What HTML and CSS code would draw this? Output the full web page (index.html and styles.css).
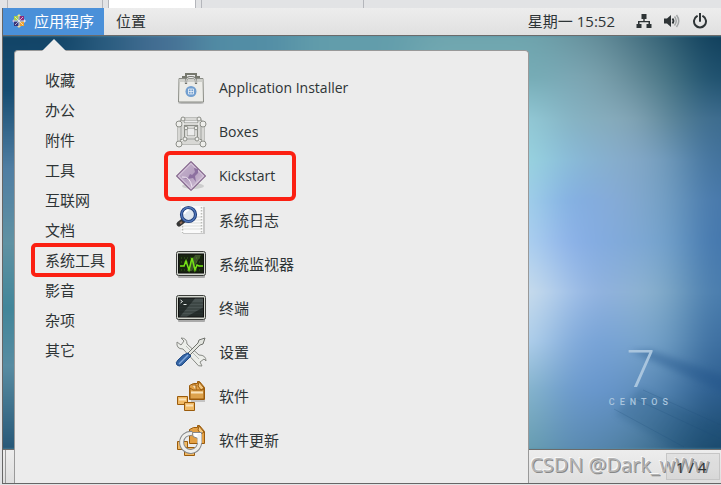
FILE: index.html
```html
<!DOCTYPE html>
<html lang="zh-CN">
<head>
<meta charset="utf-8">
<meta name="viewport" content="width=device-width, initial-scale=1">
<title>应用程序</title>
<link rel="stylesheet" href="styles.css">
</head>
<body>
<div class="host-tabs"><span class="host-tab"></span><span class="host-tab host-tab-active"></span><span class="host-tab"></span></div>
<div class="screen">
  <header class="topbar">
    <button class="top-item top-item-active" type="button">
      <svg class="distro" viewBox="0 0 14 14" aria-hidden="true">
        <path d="M7 0l2.500 2.500H4.500z" fill="#e8e36a"/><path d="M14 7l-2.500 2.500v-5z" fill="#d9dcf0"/><path d="M7 14l-2.500-2.500h5z" fill="#f3d28a"/><path d="M0 7l2.500-2.500v5z" fill="#b9a6d8"/>
        <path d="M2 2h4.500v4.500H2z" fill="#a9cf4c"/><path d="M7.500 2H12v4.500H7.500z" fill="#8c2c7c"/><path d="M7.500 7.500H12V12H7.500z" fill="#f0a532"/><path d="M2 7.500h4.500V12H2z" fill="#3b3478"/>
        <path d="M7 1v12M1 7h12M3 3l8 8M11 3l-8 8" stroke="#f1eef0" stroke-width=".7"/>
      </svg>
      应用程序
    </button>
    <button class="top-item" type="button">位置</button>
    <time class="clock">星期一 15:52</time>
    <div class="status">
      <svg viewBox="0 0 16 16" aria-hidden="true"><path d="M5.500 1h5v5H8.700v2H14v3h1.500v4h-5v-4h2V9.300h-9V11h2v4h-5v-4H2V8h5.300V6H5.500z" fill="#2e3436"/></svg>
      <svg viewBox="0 0 16 16" aria-hidden="true"><path d="M0 5.500h3L7 2v12l-4-3.500H0z" fill="#2e3436"/><path d="M8.500 5.500q2 2.500 0 5" stroke="#2e3436" stroke-width="1.800" fill="none"/><path d="M10.500 3.500q3.500 4.500 0 9M12.500 2q4.500 6 0 12" stroke="#a3a6a7" stroke-width="1.500" fill="none"/></svg>
      <svg viewBox="0 0 16 16" aria-hidden="true"><path d="M5 3.200a6 6 0 1 0 6 0M8 .5V8" stroke="#2e3436" stroke-width="2" fill="none" stroke-linecap="round"/></svg>
    </div>
  </header>
  <main class="desktop">
    <svg class="wallpaper" viewBox="0 0 718 413" preserveAspectRatio="none" aria-hidden="true">
      <defs>
        <filter id="soft" x="-10%" y="0" width="120%" height="100%" color-interpolation-filters="sRGB"><feGaussianBlur stdDeviation="20 1"/></filter>
        <filter id="haze" color-interpolation-filters="sRGB"><feGaussianBlur stdDeviation="3"/></filter>
        <linearGradient id="c0" x2="0" y2="1"><stop stop-color="#124467"/><stop offset=".13" stop-color="#164d72"/><stop offset=".32" stop-color="#507ea3"/><stop offset=".5" stop-color="#6092a3"/><stop offset=".66" stop-color="#42869a"/><stop offset=".8" stop-color="#588ca2"/><stop offset="1" stop-color="#275878"/></linearGradient>
        <linearGradient id="c1" x2="0" y2="1"><stop stop-color="#6fa5ae"/><stop offset=".1" stop-color="#75adb6"/><stop offset=".2" stop-color="#93cad6"/><stop offset=".3" stop-color="#9ad5df"/><stop offset=".4" stop-color="#a4d2ea"/><stop offset=".5" stop-color="#b0d3f0"/><stop offset=".62" stop-color="#cbdeec"/><stop offset=".74" stop-color="#b4d3ec"/><stop offset=".86" stop-color="#88b7cc"/><stop offset="1" stop-color="#69a0b0"/></linearGradient>
        <linearGradient id="c2" x2="0" y2="1"><stop stop-color="#6b99a4"/><stop offset=".1" stop-color="#7ba8b6"/><stop offset=".2" stop-color="#84b3c4"/><stop offset=".3" stop-color="#88bbda"/><stop offset=".4" stop-color="#80aee3"/><stop offset=".5" stop-color="#8cb1e9"/><stop offset=".62" stop-color="#a4c4ea"/><stop offset=".74" stop-color="#86aedb"/><stop offset=".86" stop-color="#6c9acb"/><stop offset="1" stop-color="#5c8cb4"/></linearGradient>
        <linearGradient id="c3" x2="0" y2="1"><stop stop-color="#648d99"/><stop offset=".1" stop-color="#7ba1ad"/><stop offset=".2" stop-color="#86adbd"/><stop offset=".3" stop-color="#86b0cf"/><stop offset=".4" stop-color="#86acdd"/><stop offset=".5" stop-color="#82abe0"/><stop offset=".62" stop-color="#8badde"/><stop offset=".74" stop-color="#74a0d7"/><stop offset=".86" stop-color="#6796ce"/><stop offset="1" stop-color="#5686ae"/></linearGradient>
        <linearGradient id="c4" x2="0" y2="1"><stop stop-color="#4b7585"/><stop offset=".1" stop-color="#648a98"/><stop offset=".2" stop-color="#84a5b6"/><stop offset=".3" stop-color="#86a9c8"/><stop offset=".5" stop-color="#80a9d5"/><stop offset=".62" stop-color="#92b6d4"/><stop offset=".74" stop-color="#7ca7cf"/><stop offset=".86" stop-color="#6290bd"/><stop offset="1" stop-color="#4d7d9e"/></linearGradient>
        <linearGradient id="c5" x2="0" y2="1"><stop stop-color="#315f73"/><stop offset=".1" stop-color="#467483"/><stop offset=".2" stop-color="#5b8597"/><stop offset=".3" stop-color="#6f9aba"/><stop offset=".5" stop-color="#73a2ca"/><stop offset=".62" stop-color="#7ca7c6"/><stop offset=".74" stop-color="#6c9bc1"/><stop offset=".86" stop-color="#4f80ad"/><stop offset="1" stop-color="#346488"/></linearGradient>
        <linearGradient id="c6" x2="0" y2="1"><stop stop-color="#103f5c"/><stop offset=".1" stop-color="#1e506e"/><stop offset=".2" stop-color="#3c6b8e"/><stop offset=".4" stop-color="#4778ab"/><stop offset=".5" stop-color="#4477ad"/><stop offset=".62" stop-color="#497cad"/><stop offset=".74" stop-color="#3c6ea0"/><stop offset=".86" stop-color="#2c5d8e"/><stop offset="1" stop-color="#1a496b"/></linearGradient>
      </defs>
      <rect width="718" height="413" fill="#5590a5"/>
      <g filter="url(#soft)">
        <path d="M-120 0H80v413h-200z" fill="url(#c0)"/>
        <path d="M80 0h50v413H80z" fill="#2b5d80"/>
        <path d="M130 0h60v413h-60z" fill="#456f94"/>
        <path d="M190 0h100v413H190z" fill="#528da5"/>
        <path d="M290 0h120v413H290z" fill="#629dab"/>
        <path d="M410 0h135v413H410z" fill="url(#c1)"/>
        <path d="M545 0h35v413h-35z" fill="url(#c2)"/>
        <path d="M580 0h35v413h-35z" fill="url(#c3)"/>
        <path d="M615 0h35v413h-35z" fill="url(#c4)"/>
        <path d="M650 0h36v413h-36z" fill="url(#c5)"/>
        <path d="M686 0h170v413H686z" fill="url(#c6)"/>
      </g>
      <path d="M627 315l20-1 78 27v17z" fill="#1f5188" opacity=".38" filter="url(#haze)"/>
      <path d="M637 352l85 41v20h-50l-60-35z" fill="#1c5078" opacity=".22" filter="url(#haze)"/>
      <path d="M640 354l80 36M630 362l88 41M611 373l70 38" stroke="#1c4b78" opacity=".2"/>
    </svg>
    <div class="brand"><span class="brand-number">7</span><span class="brand-name">CENTOS</span></div>
  </main>
  <footer class="taskbar"><span class="taskbar-edge"></span><button class="pager" type="button">1 / 4</button></footer>
  <p class="watermark">CSDN @Dark_wWw</p>

  <nav class="menu" aria-label="应用程序">
    <ul class="categories">
      <li><button type="button">收藏</button></li>
      <li><button type="button">办公</button></li>
      <li><button type="button">附件</button></li>
      <li><button type="button">工具</button></li>
      <li><button type="button">互联网</button></li>
      <li><button type="button">文档</button></li>
      <li><button class="marked" type="button">系统工具</button></li>
      <li><button type="button">影音</button></li>
      <li><button type="button">杂项</button></li>
      <li><button type="button">其它</button></li>
    </ul>
    <ul class="apps">
      <li><button class="latin" type="button">
        <svg viewBox="0 0 32 32" aria-hidden="true"><ellipse cx="16" cy="31" rx="13" ry="1.500" fill="#bbb"/><path d="M8 7V5h3V2h10v3h3v2" fill="none" stroke="#77796f" stroke-width="2"/><path d="M4 6.500h24l.5 23.500h-25z" fill="#ecece8" stroke="#8b8d86"/><path d="M4.500 7h23v3h-23z" fill="#cfd0cb"/><path d="M11 12V9q0-4 5-4t5 4v3" fill="none" stroke="#74766e" stroke-width="2.200"/><path d="M11 11V9q0-3.500 5-3.500T21 9v2" fill="none" stroke="#eee"/><circle cx="16" cy="19.500" r="5.500" fill="#729fcf"/><path d="M13.500 17h5v5h-5zM16 17v5M13.500 19.500h5" fill="none" stroke="#eef3f8" stroke-width=".8"/></svg>
        Application Installer</button></li>
      <li><button class="latin" type="button">
        <svg viewBox="0 0 32 32" aria-hidden="true"><g fill="none" stroke="#8c8e88" stroke-width="3"><path d="M4 8h24v19H4zM8 3h16v22H8zM11 11h10v10H11zM4 8l4-5M28 8l-4-5M4 27l7-6M28 27l-7-6"/></g><g fill="none" stroke="#f1f1ee" stroke-width="1.500"><path d="M4 8h24v19H4zM8 3h16v22H8zM11 11h10v10H11zM4 8l4-5M28 8l-4-5M4 27l7-6M28 27l-7-6"/></g><g fill="#eeeeeb" stroke="#8c8e88"><circle cx="4" cy="8" r="3"/><circle cx="28" cy="8" r="3"/><circle cx="4" cy="28" r="3"/><circle cx="28" cy="28" r="3"/><circle cx="8" cy="3" r="2"/><circle cx="24" cy="3" r="2"/><circle cx="11" cy="12" r="1.800"/><circle cx="21" cy="12" r="1.800"/><circle cx="10" cy="23" r="2"/><circle cx="22" cy="23" r="2"/></g></svg>
        Boxes</button></li>
      <li><button class="latin marked" type="button">
        <svg viewBox="0 0 32 32" aria-hidden="true"><defs><linearGradient id="ks" x2="1" y2="1"><stop stop-color="#c9b8cf"/><stop offset=".5" stop-color="#b6a0c0"/><stop offset="1" stop-color="#dacddd"/></linearGradient></defs><ellipse cx="18" cy="26" rx="11" ry="3" fill="#cdcdcd"/><path d="M16 1.500L30.500 16 16 30.500 1.500 16z" fill="url(#ks)" stroke="#5c3566"/><path d="M16 3.500L28.500 16 16 28.500 3.500 16z" fill="none" stroke="#decfe2"/><path d="M19 8l1 4-3 3-2-1-2 4H8l4 1 6-1 3 4-1-6 3-3v-4z" fill="#8d70a0"/><path d="M7 17q8-1 10 10" fill="none" stroke="#eee4f0"/></svg>
        Kickstart</button></li>
      <li><button type="button">
        <svg viewBox="0 0 32 32" aria-hidden="true"><path d="M8 3h22v27H8z" fill="#c8c8c8"/><path d="M6 2h22v27H6z" fill="#fafafa"/><path d="M7 13h19M7 16h19M7 19h19M7 22h19M7 25h19" stroke="#dddfdb"/><path d="M7.500 19v10M26.500 3v26" stroke="#b9bab6" stroke-width="1.500" stroke-dasharray="1.500 1.500"/><path d="M8.500 16.500L4 20" stroke="#353535" stroke-width="5" stroke-linecap="round"/><path d="M7 18l-2 1.500" stroke="#936c55" stroke-width="2"/><circle cx="13.500" cy="10.500" r="7" fill="#dfe7ef" stroke="#203d78" stroke-width="3.200"/><circle cx="13.500" cy="10.500" r="7" fill="none" stroke="#5279bc" stroke-width="1.300"/><path d="M9.500 10q0-3 4-4" fill="none" stroke="#fff" stroke-width="2"/></svg>
        系统日志</button></li>
      <li><button type="button">
        <svg viewBox="0 0 32 32" aria-hidden="true"><rect x="3" y="27" width="27" height="3" rx="1" fill="#aaa"/><rect x="1.500" y="3.500" width="29" height="24" rx="2" fill="#d3d7cf" stroke="#3c3e3b"/><rect x="3.500" y="6" width="25" height="19" fill="#17230f" stroke="#111"/><path d="M6 10h20M6 14h20M6 18h20M6 22h20" stroke="#386b16" stroke-dasharray="1 2"/><path d="M20 7h6l-9 16h-5z" fill="#84b05c" opacity=".35"/><path d="M5 18h4l2-5 3 9 3-12 3 12 2-5 2 1h4" fill="none" stroke="#76e316" stroke-width="1.500"/></svg>
        系统监视器</button></li>
      <li><button type="button">
        <svg viewBox="0 0 32 32" aria-hidden="true"><rect x="3" y="27" width="27" height="3" rx="1" fill="#aaa"/><rect x="1.500" y="3.500" width="29" height="24" rx="2" fill="#d3d7cf" stroke="#3c3e3b"/><rect x="3.500" y="6" width="25" height="19" fill="#28302f" stroke="#111"/><path d="M20 6.500h8v9l-16 9H5z" fill="#738080" opacity=".45"/><path d="M4 11h24M4 14h24M4 17h24M4 20h24M4 23h24" stroke="#18201f" opacity=".5"/><path d="M5.500 8l2 1.500-2 1.500M8.500 12.500h3" fill="none" stroke="#e9ecea"/></svg>
        终端</button></li>
      <li><button type="button">
        <svg viewBox="0 0 32 32" aria-hidden="true"><path d="M6 2l3 3-3 4-4-3q-1 7 6 7l13 14q2 4 6 3l-2-4 4-3 2 2q0-6-7-6L12 8q0-6-6-6z" fill="#eceeea" stroke="#888a85"/><path d="M11 10l13 13" stroke="#b8bab6"/><path d="M30 2l-2 6-3 1L14 20l-2-2L23 7l1-3z" fill="#e2e4df" stroke="#70726d"/><path d="M13 17l3 3-9 9q-3 2-5 0-2-2 1-5 5-6 10-7z" fill="#3465a4" stroke="#204a87"/><path d="M13 19l-9 9" stroke="#83aade" stroke-width="1.500"/></svg>
        设置</button></li>
      <li><button type="button">
        <svg viewBox="0 0 32 32" aria-hidden="true"><path d="M16 20h14v2H16z" fill="#c4c4c4"/><g stroke="#9a5b0c"><path d="M14.500 5.500l4-2h4v-2h2l5 6v12h-15z" fill="#e3a045"/><path d="M15 8l3 2h9l2-1v10H15z" fill="#dda24c"/><path d="M24 2l5 6-3 2-3-4z" fill="#f3c780"/><path d="M17 5h4v5" fill="#f7ddb0"/><path d="M2.500 16.500h10v8h-10z" fill="#f0b965"/><path d="M9.500 22.500h10v8h-10z" fill="#f0b965"/></g><path d="M4 19.500h7M11 25.500h7M16 12.500h12" stroke="#fae3ba" stroke-width="2"/></svg>
        软件</button></li>
      <li><button type="button">
        <svg viewBox="0 0 32 32" aria-hidden="true"><g stroke="#9a5b0c"><path d="M14.500 5.500l4-2h4v-2h2l5 6v12h-15z" fill="#e3a045"/><path d="M24 2l5 6-3 2-3-4z" fill="#f3c780"/><path d="M2.500 17.500h10v8h-10z" fill="#f0b965"/><path d="M9.500 23.500h10v8h-10z" fill="#f0b965"/></g><path d="M17 9.500A9 9 0 1 0 24.500 17" fill="none" stroke="#85878a" stroke-width="5"/><path d="M17 9.500A9 9 0 1 0 24.500 17" fill="none" stroke="#eeeeec" stroke-width="3"/><path d="M17.500 8.500h9v9h-3.500v-3l-5-2z" fill="#fff" stroke="#85878a"/><path d="M22.500 10v9h4v-9z" fill="#f3f3f1"/></svg>
        软件更新</button></li>
    </ul>
  </nav>
</div>
</body>
</html>
```

FILE: styles.css
```css
* {
  box-sizing: border-box;
}

body {
  margin: 0;
  min-height: 100vh;
  display: flex;
  flex-direction: column;
  padding-bottom: 1px;
  background: #e2e3e5;
  color: #2e3436;
  font: 15px/20px "Open Sans", "Noto Sans CJK SC", sans-serif;
}

button {
  border: 0;
  margin: 0;
  padding: 0;
  background: none;
  color: inherit;
  font: inherit;
  text-align: left;
}

ul {
  list-style: none;
  margin: 0;
  padding: 0;
}

.host-tabs {
  display: flex;
  gap: 5px;
  height: 8px;
  padding-left: 7px;
}

.host-tab {
  width: 96px;
  border: solid #b4b6bb;
  border-width: 0 1px;
}

.host-tab:last-child {
  width: 163px;
}

.host-tab-active {
  width: 88px;
  background: #fff;
}

.screen {
  position: relative;
  flex: 1;
  display: flex;
  flex-direction: column;
  margin-left: 2px;
  border-left: 1px solid #666;
  border-bottom: 1px solid #666;
}

.topbar {
  display: flex;
  align-items: stretch;
  height: 28px;
  border-bottom: 1px solid #6b6b6b;
  background: linear-gradient(#ededed, #e0e0e0);
}

.top-item {
  display: flex;
  align-items: center;
  gap: 8px;
  padding: 0 12px 1px;
}

.top-item-active {
  padding: 0 10px 1px 9px;
  background: #4a90d9;
  color: #fff;
}

.distro {
  width: 14px;
  height: 14px;
}

.clock {
  margin-left: auto;
  align-self: center;
  padding-bottom: 1px;
}

.status {
  display: flex;
  align-items: center;
  gap: 12px;
  padding: 0 13px 1px 21px;
}

.status svg {
  width: 16px;
  height: 16px;
}

.desktop {
  position: relative;
  flex: 1;
  display: flex;
  align-items: flex-end;
  justify-content: flex-end;
  padding: 0 48px 41px 0;
}

.wallpaper {
  position: absolute;
  inset: 0;
  width: 100%;
  height: 100%;
}

.brand {
  position: relative;
  display: flex;
  flex-direction: column;
  align-items: center;
  color: #a9c5de;
}

.brand-number {
  font: 300 51px/52px Roboto, sans-serif;
}

.brand-name {
  font: 500 9px/12px Roboto, sans-serif;
  letter-spacing: 5px;
}

.taskbar {
  display: flex;
  align-items: center;
  justify-content: space-between;
  height: 34px;
  padding: 0 1px 0 2px;
  border-top: 1px solid #6b6b6b;
  background: linear-gradient(#ededed, #dfdfdf);
}

.taskbar-edge {
  align-self: stretch;
  border-left: 1px solid #999;
}

.pager {
  position: relative;
  z-index: 1;
  width: 54px;
  height: 27px;
  padding-left: 9px;
  border: 1px solid #c6c6c6;
  background: rgb(0 0 0 / 4%);
}

.watermark {
  position: absolute;
  right: 12px;
  bottom: 4px;
  margin: 0;
  color: #b4b4b4;
  font: 20px/28px "Open Sans", sans-serif;
  text-shadow: 1px 1px #888, -1px -1px #f8f8f8;
}

.menu {
  position: absolute;
  top: 42px;
  bottom: 0;
  left: 11px;
  display: flex;
  width: 515px;
  padding: 14px 0 0 30px;
  border: 1px solid #999;
  border-bottom: 0;
  border-radius: 4px 4px 0 0;
  background: #ececec;
}

.menu::before {
  content: "";
  position: absolute;
  top: -12px;
  left: 27px;
  border: solid transparent;
  border-width: 0 12px 12px;
  border-bottom-color: #ececec;
}

.categories {
  width: 130px;
}

.categories button {
  display: block;
  height: 30px;
}

.categories .marked {
  margin: 0 -8px 0 -12px;
  padding: 0 8px 0 12px;
  border-radius: 3px;
  outline: 4px solid #fb2012;
  outline-offset: -2px;
}

.apps {
  padding-top: 1px;
}

.apps button {
  display: flex;
  align-items: center;
  gap: 12px;
  height: 44px;
}

.apps .latin {
  font-size: 14px;
}

.apps svg {
  width: 32px;
  height: 32px;
}

.apps .marked {
  margin: 0 -8px;
  padding: 0 18px 0 8px;
  border-radius: 3px;
  outline: 4px solid #fb2012;
  outline-offset: -1px;
}
```
